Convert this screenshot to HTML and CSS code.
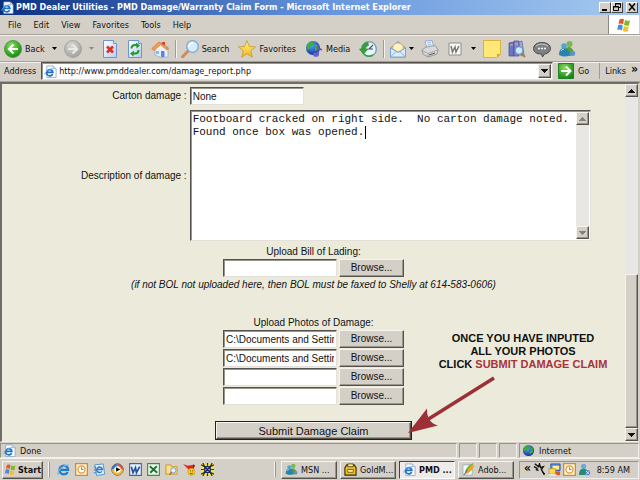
FILE: index.html
```html
<!DOCTYPE html>
<html lang="en">
<head>
<meta charset="utf-8">
<title>PMD Dealer Utilities - PMD Damage/Warranty Claim Form</title>
<link rel="stylesheet" href="styles.css">
</head>
<body>
<svg class="defs" aria-hidden="true">
  <defs>
    <radialGradient id="green" cx=".4" cy=".3" r=".8"><stop offset="0" stop-color="#8be05c"/><stop offset=".6" stop-color="#35a527"/><stop offset="1" stop-color="#1a7a17"/></radialGradient>
    <radialGradient id="grey" cx=".4" cy=".3" r=".8"><stop offset="0" stop-color="#d8d8d6"/><stop offset="1" stop-color="#9b9b99"/></radialGradient>
    <linearGradient id="sheet" x2="1" y2="1"><stop offset="0" stop-color="#fff"/><stop offset="1" stop-color="#b4cdf2"/></linearGradient>
    <linearGradient id="gold" x2="0" y2="1"><stop offset="0" stop-color="#fff68c"/><stop offset="1" stop-color="#f2b21c"/></linearGradient>
    <radialGradient id="globe" cx=".4" cy=".3" r=".8"><stop offset="0" stop-color="#5da5f5"/><stop offset="1" stop-color="#0a1e96"/></radialGradient>
    <symbol id="ie" viewBox="0 0 14 14"><path d="M3 1h7l3 3v9.500H3z" fill="#fff" stroke="#7d9cc8" stroke-width=".8"/><path d="M10 1v3h3" fill="#cfe0f6" stroke="#7d9cc8" stroke-width=".6"/><path d="M9.300 9.800A3.400 3.400 0 1 1 9.600 8H3.200" fill="none" stroke="#1c70c9" stroke-width="1.800"/><path d="M1 10.500C.5 8 5 4 10 4" fill="none" stroke="#5aa7ea"/></symbol>
    <symbol id="ie-big" viewBox="0 0 14 14"><path d="M11.500 9.600A4.700 4.700 0 1 1 12 7.300H3" fill="none" stroke="#1f7bd0" stroke-width="2.400"/><path d="M1.500 12.500C-.5 10 6 1.500 12.500 2.300" fill="none" stroke="#67b5ee" stroke-width="1.300"/></symbol>
    <symbol id="flag" viewBox="0 0 16 16"><path d="M3.500 2.500Q6 1 8 2.500L7 7.500Q5 6 2.500 7z" fill="#e8542b"/><path d="M9 3q2.500 1.500 5 .2l-1 5Q10.500 9.300 8 8z" fill="#7db92d"/><path d="M2.200 8Q4.500 7 6.800 8.500l-1 5Q3.500 12 1.200 13z" fill="#4a8be0"/><path d="M7.800 9q2.500 1.500 5 .2l-1 5Q9.300 15.300 6.800 14z" fill="#f6c12c"/></symbol>
    <symbol id="people" viewBox="0 0 18 18"><circle cx="11.500" cy="4" r="3" fill="#79b84a"/><path d="M8 8q5-3 8 4l-3 4H9z" fill="#5ba13b"/><circle cx="6" cy="6" r="2.800" fill="#4fa7cf"/><path d="M1 15q0-7 5-7t6 7q-5 3-11 0z" fill="#2c82ae"/><path d="M12 15q0-4 3-4t2 4q-2 2-5 0z" fill="#5c96c8"/><path d="M3 11q1-2 3-2" stroke="#b9e5f2" fill="none"/></symbol>
    <symbol id="earth" viewBox="0 0 14 14"><circle cx="7" cy="7" r="6" fill="url(#globe)"/><path d="M2 4q2-3 5-2.500L8 4 6 6 4 5.500 3 8 1.500 7zM9 3l3 2v4L9 11 7.500 8.500 10 7z" fill="#2fb12f"/></symbol>
    <symbol id="clock" viewBox="0 0 14 14"><path d="M.7.7h12.600v12.600H.7z" fill="#fdf3d9" stroke="#d68a2b" stroke-width="1.400"/><circle cx="7" cy="7" r="3.800" fill="#fff" stroke="#e0952f" stroke-width="1.300"/><path d="M7 4.500V7h2" fill="none" stroke="#b56a14"/></symbol>
    <symbol id="up" viewBox="0 0 7 4"><path d="M3 0h1v1h1v1h1v1h1v1H0V3h1V2h1V1h1z" fill="currentColor"/></symbol>
    <symbol id="down" viewBox="0 0 7 4"><path d="M0 0h7v1H6v1H5v1H4v1H3V3H2V2H1V1H0z" fill="currentColor"/></symbol>
  </defs>
</svg>

<header class="chrome">
  <div class="titlebar">
    <svg class="ic-s"><use href="#ie"/></svg>
    <h1>PMD Dealer Utilities - PMD Damage/Warranty Claim Form - Microsoft Internet Explorer</h1>
    <div class="winbtns">
      <button class="winbtn" aria-label="Minimize"><svg viewBox="0 0 10 8"><path d="M2 7h5" stroke="#000" stroke-width="2"/></svg></button>
      <button class="winbtn" aria-label="Restore"><svg viewBox="0 0 10 8"><path d="M3.500 3V.5h5v4H7M3 1h6M1.500 3.500h5v4h-5zM1 4h6" fill="none" stroke="#000"/></svg></button>
      <button class="winbtn close" aria-label="Close"><svg viewBox="0 0 10 8"><path d="M2 .5l6 7M8 .5l-6 7" stroke="#000" stroke-width="1.500"/></svg></button>
    </div>
  </div>

  <div class="menurow">
    <nav class="menu">
      <a href="#">File</a><a href="#">Edit</a><a href="#">View</a><a href="#">Favorites</a><a href="#">Tools</a><a href="#">Help</a>
    </nav>
    <div class="brand"><svg class="ic-m"><use href="#flag"/></svg></div>
  </div>

  <div class="toolbar">
    <div class="group">
      <button class="tool"><svg class="ic" viewBox="0 0 18 18"><circle cx="9" cy="9" r="8.500" fill="url(#green)" stroke="#3b8b34" stroke-width=".7"/><path d="M9.500 4.500L5 9l4.500 4.500M5.500 9H14" fill="none" stroke="#fff" stroke-width="2.200"/></svg>Back</button>
      <button class="drop" aria-label="Back history"><svg class="tri" viewBox="0 0 5 3"><path d="M0 0h5L2.500 3z"/></svg></button>
      <button class="tool" aria-label="Forward"><svg class="ic" viewBox="0 0 18 18"><circle cx="9" cy="9" r="8.500" fill="url(#grey)" stroke="#999" stroke-width=".7"/><path d="M8.500 4.500L13 9l-4.500 4.500M12.500 9H4" fill="none" stroke="#e9e9e6" stroke-width="2.200"/></svg></button>
      <button class="drop off" aria-label="Forward history"><svg class="tri" viewBox="0 0 5 3"><path d="M0 0h5L2.500 3z"/></svg></button>
      <button class="tool" aria-label="Stop"><svg class="ic" viewBox="0 0 18 18"><path d="M2.500.5h10l3 3v14h-13z" fill="url(#sheet)" stroke="#6e94d0"/><path d="M12.500.5v3h3" fill="#dce8fa" stroke="#6e94d0"/><path d="M6 6.500l6 6M12 6.500l-6 6" stroke="#e1301a" stroke-width="2.600"/></svg></button>
      <button class="tool" aria-label="Refresh"><svg class="ic" viewBox="0 0 18 18"><path d="M2.500.5h10l3 3v14h-13z" fill="url(#sheet)" stroke="#6e94d0"/><path d="M12.500.5v3h3" fill="#dce8fa" stroke="#6e94d0"/><path d="M5.500 8.500q0-3.500 3.500-3.500h2M12.500 10q0 3.500-3.500 3.500H7" fill="none" stroke="#229a28" stroke-width="2"/><path d="M10 2.500l4 3-3.500 3zM8 10.500l-4 3 3.500 3z" fill="#229a28"/></svg></button>
      <button class="tool" aria-label="Home"><svg class="ic" viewBox="0 0 18 18"><path d="M11 2h3v4h-3z" fill="#c24a25"/><path d="M4 9l6-6 7 6v8l-7 .5L4 15z" fill="#e9f0fc" stroke="#8aa4d4" stroke-width=".7"/><path d="M8 2L.8 8.500 3 10.500 9.500 4.500 16 10l1.500-2z" fill="#f2a152" stroke="#cd6a26" stroke-width=".7"/><path d="M10 11h3.500v6H10z" fill="#5c87d6"/><path d="M5 11h3v3H5z" fill="#8bb7ee"/></svg></button>
    </div>
    <div class="group wide">
      <button class="tool"><svg class="ic" viewBox="0 0 18 18"><path d="M7 11l-5.500 6" stroke="#d08d58" stroke-width="3" stroke-linecap="round"/><circle cx="11.500" cy="6.500" r="5.800" fill="#d6ecfc" stroke="#7ba5d9" stroke-width="1.300"/><path d="M8 7q0-4 4-4" fill="none" stroke="#fff" stroke-width="1.500"/></svg>Search</button>
      <button class="tool"><svg class="ic" viewBox="0 0 18 18"><path d="M9 .7l2.300 5.800 6.200.4-4.800 4 1.600 6.200L9 13.700l-5.300 3.400 1.600-6.200L.5 6.900l6.200-.4z" fill="url(#gold)" stroke="#c99522" stroke-width=".8"/></svg>Favorites</button>
      <button class="tool"><svg class="ic" viewBox="0 0 18 18"><circle cx="8" cy="8" r="7" fill="url(#globe)"/><path d="M2 5q3-5 7-3.500L8 5 5 7 4 10 1.500 9zM10 4l4 2-1 4-3 1z" fill="#36b13b"/><path d="M13 6v8M13 6q1 3 4 4" fill="none" stroke="#5956b8" stroke-width="1.600"/><ellipse cx="11" cy="14.500" rx="3" ry="2.300" fill="#6662c8"/></svg>Media</button>
      <button class="tool" aria-label="History"><svg class="ic" viewBox="0 0 18 18"><circle cx="10" cy="9" r="7.300" fill="#eaf5fb" stroke="#79a9bb" stroke-width="1.500"/><path d="M14 5l-4 4h4" fill="none" stroke="#456" stroke-width="1.200"/><path d="M9 2.500Q3 3 3 9H.5l4 5L9 9H6.500q0-3 3-3.500z" fill="#33a537" stroke="#1d7d26" stroke-width=".6"/><path d="M5 14q4 4 9 1" stroke="#33a537" fill="none" stroke-width="1.500"/></svg></button>
    </div>
    <div class="group">
      <button class="tool tight" aria-label="Mail"><svg class="ic" viewBox="0 0 18 18"><path d="M1.500 8L9 1.500 16.500 8v9h-15z" fill="#a9cbf2" stroke="#6c98d2"/><path d="M4 5.500q5-5 10 0v4L9 12 4 9z" fill="#fff2c0" stroke="#dca83d" stroke-width=".7"/><path d="M1.500 8L9 12.500 16.500 8v9h-15z" fill="#dcecfd" stroke="#6c98d2" stroke-width=".8"/><path d="M1.500 17L7 11.500M16.500 17L11 11.500" stroke="#6c98d2" stroke-width=".8"/></svg><svg class="tri" viewBox="0 0 5 3"><path d="M0 0h5L2.500 3z"/></svg></button>
      <button class="tool" aria-label="Print"><svg class="ic" viewBox="0 0 18 18"><path d="M4 1l7-.5 2 7-7 1.500z" fill="#eef5ff" stroke="#809fd0" stroke-width=".8"/><path d="M6 3l4-.5M6.500 5l4-.5" stroke="#84a8dc" stroke-width=".8"/><path d="M1 10l4-3 9-1.500 3 4-1 4.500-9 3-5-3z" fill="#d9d9d9" stroke="#888" stroke-width=".8"/><path d="M1 10.500l6 3 10-3.500M7 13.500V17" fill="none" stroke="#999" stroke-width=".8"/><path d="M8 15l6-2" stroke="#555"/></svg></button>
      <button class="tool" aria-label="Edit with Word"><svg class="ic" viewBox="0 0 18 18"><path d="M3 3h12v12H3z" fill="#f7f7f5" stroke="#8d8d89"/><path d="M5 6l1.500 6L9 7l1 5 3-6" fill="none" stroke="#777" stroke-width="1.500"/></svg></button>
      <button class="drop" aria-label="Edit options"><svg class="tri" viewBox="0 0 5 3"><path d="M0 0h5L2.500 3z"/></svg></button>
      <button class="tool" aria-label="Note"><svg class="ic" viewBox="0 0 18 18"><path d="M.5.5h17V14L14 17.500H.5z" fill="#ffe778" stroke="#dcb338"/><path d="M17.500 14H14v3.500z" fill="#d9a426"/></svg></button>
      <button class="tool" aria-label="Research"><svg class="ic" viewBox="0 0 18 18"><path d="M1 3l5-1v14H1z" fill="#6678c4" stroke="#3c4c96" stroke-width=".7"/><path d="M6 1h5v15H6z" fill="#8d83cc" stroke="#4c4691" stroke-width=".7"/><path d="M11 2l3-1 2 14-3 1z" fill="#9fa9d2" stroke="#5864a0" stroke-width=".7"/><path d="M2 5h3M7 4h3" stroke="#e2c35e"/><path d="M13.500 13.500L17 17" stroke="#b67639" stroke-width="2"/><circle cx="11" cy="10.500" r="3.800" fill="#c9ecfb" stroke="#5c93c4"/></svg></button>
      <button class="tool" aria-label="Discuss"><svg class="ic" viewBox="0 0 18 18"><path d="M9 2.500c5 0 8.500 2.500 8.500 6 0 3-2.500 5-6 5.500L9.500 17l-1-3C3.500 14 .5 12 .5 8.500s3.500-6 8.500-6z" fill="#7e8080" stroke="#4b4b4b"/><path d="M3 6q6-4 12 0" stroke="#c9caca" fill="none"/><circle cx="6" cy="8.500" r="1" fill="#fff"/><circle cx="9" cy="8.500" r="1" fill="#fff"/><circle cx="12" cy="8.500" r="1" fill="#fff"/></svg></button>
      <button class="tool" aria-label="Messenger"><svg class="ic"><use href="#people"/></svg></button>
    </div>
  </div>

  <form class="addressbar">
    <label for="url">Address</label>
    <div class="combo sunken">
      <svg class="ic-s"><use href="#ie"/></svg>
      <input id="url" type="text" value="http://www.pmddealer.com/damage_report.php">
      <button class="raised combobtn" type="button" aria-label="Show addresses"><svg class="arrow"><use href="#down"/></svg></button>
    </div>
    <button class="go" type="button"><svg class="ic-m" viewBox="0 0 16 16"><path d="M.5.5h15v15H.5z" fill="url(#green)" stroke="#25802a"/><path d="M8 3.500L12.500 8 8 12.500M3 8h9" fill="none" stroke="#fff" stroke-width="2"/></svg>Go</button>
    <div class="links"><a href="#">Links</a><span class="more">»</span></div>
  </form>
</header>

<main class="viewport">
  <div class="page">
    <form class="claim">
      <div class="field">
        <label for="carton">Carton damage :</label>
        <input id="carton" class="text sunken" type="text" value="None">
      </div>
      <div class="field">
        <label for="desc">Description of damage :</label>
        <div class="memo sunken">
          <textarea id="desc" spellcheck="false">Footboard cracked on right side.  No carton damage noted.
Found once box was opened.</textarea>
          <span class="caret"></span>
          <div class="scroll disabled">
            <span class="raised"><svg class="arrow"><use href="#up"/></svg></span>
            <span class="raised"><svg class="arrow"><use href="#down"/></svg></span>
          </div>
        </div>
      </div>

      <section class="upload">
        <label for="bol">Upload Bill of Lading:</label>
        <div class="file"><input id="bol" class="text sunken" type="text"><button class="raised" type="button">Browse...</button></div>
        <p class="note">(if not BOL not uploaded here, then BOL must be faxed to Shelly at 614-583-0606)</p>
      </section>

      <section class="upload photos">
        <label for="photo1">Upload Photos of Damage:</label>
        <div class="file"><input id="photo1" class="text sunken" type="text" value="C:\Documents and Settings"><button class="raised" type="button">Browse...</button></div>
        <div class="file"><input aria-label="Photo 2" class="text sunken" type="text" value="C:\Documents and Settings"><button class="raised" type="button">Browse...</button></div>
        <div class="file"><input aria-label="Photo 3" class="text sunken" type="text"><button class="raised" type="button">Browse...</button></div>
        <div class="file"><input aria-label="Photo 4" class="text sunken" type="text"><button class="raised" type="button">Browse...</button></div>
      </section>

      <div class="actions"><button class="submit" type="button"><span class="raised">Submit Damage Claim</span></button></div>
    </form>

    <aside class="callout">
      <p>ONCE YOU HAVE INPUTED<br>ALL YOUR PHOTOS<br>CLICK <em>SUBMIT DAMAGE CLAIM</em></p>
      <svg class="pointer" viewBox="0 0 90 60"><path d="M86 2L19 44" stroke="#9c3036" stroke-width="3.500"/><path d="M0 57L19 32.500Q18.500 38 21 43 24 48 30 49.500z" fill="#9c3036"/></svg>
    </aside>
  </div>
  <div class="scroll">
    <span class="raised"><svg class="arrow"><use href="#up"/></svg></span>
    <span class="track"></span>
    <span class="raised thumb"></span>
    <span class="raised"><svg class="arrow"><use href="#down"/></svg></span>
  </div>
</main>

<footer>
  <div class="status">
    <span class="panel main"><svg class="ic-s"><use href="#ie"/></svg>Done</span>
    <span class="panel small"></span><span class="panel small"></span><span class="panel small"></span>
    <span class="panel zone"><svg class="ic-s"><use href="#earth"/></svg>Internet</span>
  </div>
  <div class="taskbar">
    <button class="start raised"><svg class="ic-s"><use href="#flag"/></svg>Start</button>
    <span class="grip"></span>
    <div class="quick">
      <svg class="ic-s"><use href="#ie-big"/></svg>
      <svg class="ic-s"><use href="#clock"/></svg>
      <svg class="ic-s" viewBox="0 0 14 14"><path d="M2 2l9-1 1.500 11L4 13.500z" fill="#e9f4ff" stroke="#4c8fce"/><path d="M9.500 9A3 3 0 1 1 10 7H5" fill="none" stroke="#2478c4" stroke-width="1.600"/><path d="M1 4l2 1M1 7l2 1M1 10l2 1" stroke="#2478c4"/></svg>
      <svg class="ic-s" viewBox="0 0 14 14"><circle cx="7" cy="7" r="6" fill="#fff" stroke="#222"/><path d="M7 1a6 6 0 0 0-6 6h2.500A3.500 3.500 0 0 1 7 3.500z" fill="#3478d4"/><path d="M7 1a6 6 0 0 1 6 6h-2.500A3.500 3.500 0 0 0 7 3.500z" fill="#e9532d"/><path d="M1 7a6 6 0 0 0 12 0h-2.500a3.500 3.500 0 0 1-7 0z" fill="#f4b928"/><path d="M5.500 4.500L10 7 5.500 9.500z"/></svg>
      <svg class="ic-s" viewBox="0 0 14 14"><path d="M.7.7h12.600v12.600H.7z" fill="#eef4ff" stroke="#3764b4" stroke-width="1.200"/><path d="M2.500 4l1.800 6.500L7 5l1 5.500L11.500 4" fill="none" stroke="#244f9e" stroke-width="1.800"/></svg>
      <svg class="ic-s" viewBox="0 0 14 14"><path d="M.7.7h12.600v12.600H.7z" fill="#eef8ec" stroke="#3d8a49" stroke-width="1.200"/><path d="M3 3.500l8 7M10.500 3.500l-7 7" stroke="#1d7331" stroke-width="2"/></svg>
      <svg class="ic-s" viewBox="0 0 14 14"><path d="M1 2h5l1 2h6v8H1z" fill="#fbe08b" stroke="#c99328"/><circle cx="9" cy="8" r="2.800" fill="#e3f3fd" stroke="#7897ba"/><path d="M7 10l-2 2.500" stroke="#96653b" stroke-width="1.500"/></svg>
      <svg class="ic-s" viewBox="0 0 14 14"><path d="M0 1l5 2 7-1v4l-6 1z" fill="#e3211b"/><path d="M11 1l2 2-2 3z" fill="#a31212"/><circle cx="9" cy="9.500" r="3.800" fill="#fbd11f" stroke="#bb8212" stroke-width=".6"/><path d="M7.500 8.500h1M10 8.500h1M7.500 11q1.500 1 3 0" stroke="#4b3202" fill="none"/></svg>
      <svg class="ic-s" viewBox="0 0 14 14"><path d="M0 0h14v14H0z" fill="#f2e63b"/><path d="M2 0l2 4-4-2M7 0v3M12 0l-2 4 4-2M0 7h3M14 7h-3M2 14l2-4-4 2M7 14v-3M12 14l-2-4 4 2M4 4h6v6H4zM4 4l6 6M10 4l-6 6" stroke="#1b2560" stroke-width="1.300" fill="none"/></svg>
    </div>
    <span class="grip"></span>
    <nav class="tasks">
      <button class="raised"><svg class="ic-s"><use href="#people"/></svg>MSN ...</button>
      <button class="raised"><svg class="ic-s" viewBox="0 0 14 14"><path d="M3 2h8l2 3v8H1V5z" fill="#edc122" stroke="#332a06" stroke-width="1.200"/><path d="M4 1h6v3H4z" fill="#fff09b" stroke="#332a06" stroke-width=".8"/><path d="M4 7h6v3H4z" fill="#fff4b5" stroke="#7b5c0c"/></svg>GoldM...</button>
      <button class="pressed"><svg class="ic-s"><use href="#ie"/></svg>PMD ...</button>
      <button class="raised"><svg class="ic-s" viewBox="0 0 14 14"><path d="M1 2h10v11H1z" fill="#f3f9ff" stroke="#88a6bb" stroke-width=".8"/><path d="M3 10Q5 3 12 0 13 7 6 11z" fill="#75b83b"/><path d="M3 12Q6 6 12 1l1 3Q9 10 4 12z" fill="#f4a128"/><path d="M2 13l4-6" stroke="#33649a"/></svg>Adob...</button>
    </nav>
    <div class="tray">
      <span class="more">«</span>
      <svg class="ic-s" viewBox="0 0 14 14"><path d="M2 1l4 3 1-3 1 4 3-1-2 3 3 5M1 4l4 2M6 8l-3-1" fill="none" stroke="#111" stroke-width="1.500"/><path d="M10 10l3 1-1 2.500z"/></svg>
      <svg class="ic-s" viewBox="0 0 14 14"><path d="M3 1h10v7H3z" fill="#5c92e8" stroke="#3155a0"/><path d="M5 3h7v4H5z" fill="#fff08b"/><path d="M1 6h7v6H1z" fill="#f7d94d" stroke="#a8851e" stroke-width=".6"/><path d="M8 9h5v4H8z" fill="#e25335"/><path d="M1 12h8v1.500H1z" fill="#eee"/></svg>
      <svg class="ic-s"><use href="#clock"/></svg>
      <svg class="ic-s" viewBox="0 0 14 14"><circle cx="6" cy="3.500" r="2.800" fill="#66add8"/><path d="M1 13q0-7 5-7t5 7z" fill="#268b72"/><path d="M8 8h5v5H8z" fill="#4d7fcf"/><path d="M8.500 8.500l4 4M12.500 8.500l-4 4" stroke="#fff" stroke-width=".8"/></svg>
      <time>8:59 AM</time>
    </div>
  </div>
</footer>
</body>
</html>
```
FILE: styles.css
```css
* { box-sizing: border-box; }

body {
  margin: 0;
  min-height: 100vh;
  display: flex;
  flex-direction: column;
  background: #d4d0c8;
  color: #111;
  font: 9px/12px "DejaVu Sans Condensed", "DejaVu Sans", sans-serif;
  overflow: hidden;
}

button, input, textarea {
  margin: 0;
  padding: 0;
  border: 0;
  border-radius: 0;
  outline: 0;
  background: none;
  color: inherit;
  font: inherit;
}

button, .raised { display: flex; align-items: center; justify-content: center; }
a { color: inherit; text-decoration: none; }
h1, p { margin: 0; }
svg { flex: none; display: block; }

.defs { position: absolute; width: 0; height: 0; }
.ic { width: 18px; height: 18px; }
.ic-m { width: 16px; height: 16px; }
.ic-s { width: 13px; height: 13px; }
.tri { width: 5px; height: 3px; }
.arrow { width: 7px; height: 4px; }

.raised {
  background: #d4d0c8;
  border: 1px solid;
  border-color: #f6f4f0 #55524e #55524e #f6f4f0;
  box-shadow: inset -1px -1px #9a968f;
}

.sunken {
  background: #fff;
  border: 1px solid;
  border-color: #55524e #e4e1da #e4e1da #55524e;
  box-shadow: inset 1px 1px #98958f;
}

/* Browser chrome */
.titlebar {
  display: flex;
  align-items: center;
  gap: 2px;
  height: 15px;
  padding: 0 2px 1px 1px;
  background: linear-gradient(90deg, #0c2f80, #6594dc 50%, #a6caf0);
  color: #fff;
}
.titlebar h1 { flex: 1; font-size: 9px; line-height: 12px; white-space: nowrap; }
.winbtns { display: flex; }
.winbtn {
  width: 12px;
  height: 11px;
  background: #d4d0c8;
  border: 1px solid;
  border-color: #fff #444 #444 #fff;
}
.winbtn svg { width: 10px; height: 8px; }
.close { margin-left: 3px; }

.menurow {
  display: flex;
  height: 20px;
  border-bottom: 1px solid #a5a199;
}
.menu {
  flex: 1;
  display: flex;
  align-items: center;
  gap: 12px;
  padding-left: 8px;
}
.brand {
  display: grid;
  place-items: center;
  width: 32px;
  background: #fff;
  border-left: 1px solid #888;
  border-right: 1px solid #d4d0c8;
}

.toolbar {
  display: flex;
  align-items: center;
  height: 26px;
  padding-left: 4px;
  border-top: 1px solid #f4f2ee;
}
.group { display: flex; align-items: center; gap: 7px; padding-right: 6px; }
.group + .group { padding-left: 5px; border-left: 1px solid #a09c94; box-shadow: inset 1px 0 #f4f2ee; }
.group.wide { gap: 9px; }
.tool { gap: 3px; }
.tight { gap: 2px; }
.off { color: #8d8a84; }
.off path { fill: #8d8a84; }

.addressbar {
  display: flex;
  align-items: center;
  gap: 5px;
  height: 21px;
  padding: 0 2px 1px 4px;
  border-top: 1px solid #a5a199;
  border-bottom: 1px solid #a5a199;
  box-shadow: inset 0 1px #f4f2ee;
}
.combo { flex: 1; display: flex; align-items: center; height: 18px; padding: 1px 1px 1px 2px; gap: 2px; }
.combo input { flex: 1; min-width: 0; }
.combobtn { width: 13px; height: 14px; }
.go { gap: 4px; }
.links {
  display: flex;
  align-items: center;
  gap: 5px;
  margin-left: 5px;
  padding-left: 5px;
  border-left: 1px solid #a09c94;
}
.more { font-size: 12px; line-height: 12px; font-weight: bold; padding-bottom: 4px; }

/* Web page area */
.viewport {
  flex: 1;
  display: flex;
  border: 2px solid #6f6d69;
  border-width: 2px 2px 1px;
  border-right-color: #d4d0c8;
  border-bottom-color: #f4f2ee;
}
.page {
  position: relative;
  flex: 1;
  background: #ecebdb;
  font: 10px/12px "Liberation Sans", Arial, sans-serif;
}
.claim {
  width: 89%;
  margin: 0 auto;
  padding-top: 3px;
}
.field {
  display: grid;
  grid-template-columns: 3fr 8fr;
  align-items: center;
  gap: 3px;
  margin-bottom: 5px;
}
.field > label { text-align: right; }
.text { width: 114px; height: 18px; padding: 0 2px; }
.memo { position: relative; display: flex; height: 131px; padding: 1px; }
.memo textarea {
  flex: 1;
  min-width: 0;
  padding: 1px;
  resize: none;
  overflow: hidden;
}
.memo textarea, .caret { font: 11px/13px "Liberation Mono", "Courier New", monospace; }
.caret {
  position: absolute;
  top: 15px;
  left: calc(26ch + 3px);
  width: 1px;
  height: 13px;
  background: #000;
}

.upload { display: flex; flex-direction: column; align-items: center; gap: 1px; }
.photos { margin-top: 25px; }
.file { display: flex; gap: 2px; }
.file .raised { width: 65px; height: 18px; }
.note { line-height: 14px; font-style: italic; }
.actions { display: flex; justify-content: center; margin-top: 16px; }
.submit { width: 197px; height: 19px; border: 1px solid #222; font-size: 11px; }
.submit .raised { flex: 1; align-self: stretch; }

.callout {
  position: absolute;
  right: 15px;
  bottom: 5px;
  width: 174px;
  text-align: center;
  font-weight: bold;
  font-size: 11px;
  line-height: 13px;
  white-space: nowrap;
}
.callout em { color: #a8323a; font-style: normal; }
.pointer { width: 90px; height: 60px; margin-left: -28px; margin-top: 5px; }

.scroll { display: flex; flex-direction: column; width: 13px; background: #e9e7e3; }
.scroll .raised { height: 13px; }
.scroll .track { flex: 7; }
.scroll .thumb { flex: 6; }
.disabled { justify-content: space-between; color: #85827c; }

/* Status bar and taskbar */
.status { display: flex; gap: 2px; height: 16px; padding: 1px 1px 0 0; }
.panel {
  display: flex;
  align-items: center;
  gap: 4px;
  padding-left: 2px;
  border: 1px solid;
  border-color: #98948c #f2f0ec #f2f0ec #98948c;
}
.main { flex: 1; }
.small { width: 18px; }
.zone { width: 120px; }

.taskbar {
  display: flex;
  align-items: center;
  gap: 5px;
  height: 22px;
  padding: 1px 1px 1px 2px;
  border-top: 1px solid #f4f2ee;
}
.start { width: 41px; height: 18px; gap: 1px; font-weight: bold; }
.grip { width: 2px; height: 15px; border-left: 1px solid #f6f4f0; border-right: 1px solid #98948c; }
.quick { flex: 1; display: flex; gap: 5px; padding-left: 2px; }
.tasks { display: flex; gap: 3px; }
.tasks button { width: 56px; height: 18px; gap: 3px; justify-content: flex-start; padding-left: 3px; white-space: nowrap; }
.tasks .pressed {
  background: #eeece8;
  border: 1px solid;
  border-color: #444 #fff #fff #444;
  font-weight: bold;
}
.tray {
  display: flex;
  align-items: center;
  gap: 2px;
  width: 120px;
  height: 18px;
  padding: 0 8px 0 4px;
  border: 1px solid;
  border-color: #98948c #f2f0ec #f2f0ec #98948c;
}
.tray time { margin-left: auto; white-space: nowrap; }
```
